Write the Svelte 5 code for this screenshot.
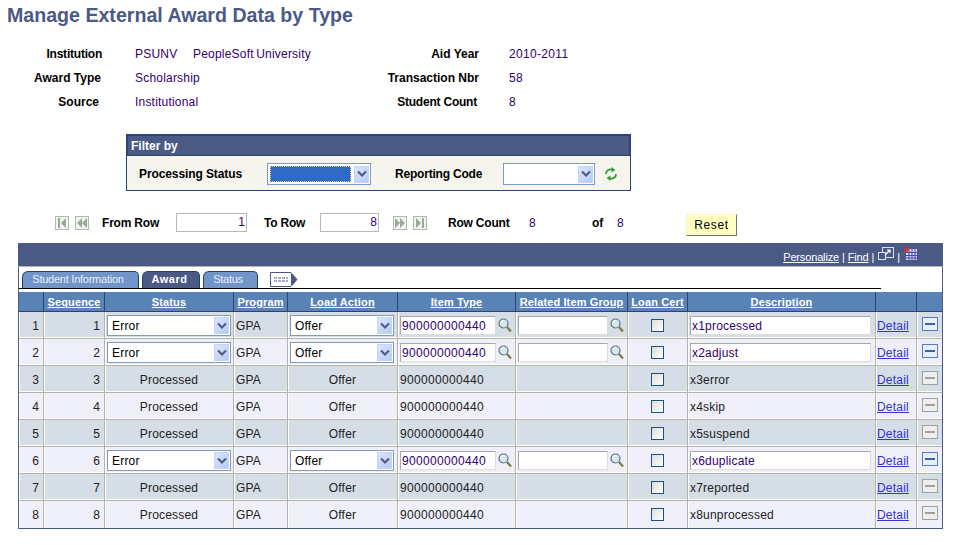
<script>
  const statusRows = [
    { n: 1, desc: 'x1processed', edit: true },
    { n: 2, desc: 'x2adjust', edit: true },
    { n: 3, desc: 'x3error', edit: false },
    { n: 4, desc: 'x4skip', edit: false },
    { n: 5, desc: 'x5suspend', edit: false },
    { n: 6, desc: 'x6duplicate', edit: true },
    { n: 7, desc: 'x7reported', edit: false },
    { n: 8, desc: 'x8unprocessed', edit: false }
  ];
  const heads = ['', 'Sequence', 'Status', 'Program', 'Load Action', 'Item Type', 'Related Item Group', 'Loan Cert', 'Description', '', ''];
</script>

{#snippet arrow()}
  <span class="arrow">
    <svg width="10" height="8" viewBox="0 0 10 8"><path d="M1 1.5 L5 5.5 L9 1.5" fill="none" stroke="#4a5a85" stroke-width="2"/></svg>
  </span>
{/snippet}

{#snippet lens()}
  <svg class="lens" width="14" height="15" viewBox="0 0 14 15">
    <circle cx="5.5" cy="5.5" r="4.5" fill="#d4e8f4" stroke="#5f7480" stroke-width="1.2"/>
    <path d="M3 4.5 A3 3 0 0 1 6 2.5" fill="none" stroke="#fff" stroke-width="1.2"/>
    <path d="M9 9 L13 13.5" stroke="#7d7a3c" stroke-width="2.2"/>
  </svg>
{/snippet}

{#snippet pagerIcon(d)}
  <span class="pg-icon">
    <svg width="12" height="12" viewBox="0 0 12 12"><path {d} fill="#9aa89a"/></svg>
  </span>
{/snippet}

<main class="page">
  <h1>Manage External Award Data by Type</h1>

  <section class="info">
    <div class="lab snug">Institution</div>
    <div class="val"><span class="code">PSUNV</span><span class="uni">PeopleSoft University</span></div>
    <div class="lab2">Aid Year</div>
    <div class="val2">2010-2011</div>

    <div class="lab minus1">Award Type</div>
    <div class="val">Scholarship</div>
    <div class="lab2">Transaction Nbr</div>
    <div class="val2">58</div>

    <div class="lab minus3">Source</div>
    <div class="val">Institutional</div>
    <div class="lab2 minus3 snug">Student Count</div>
    <div class="val2">8</div>
  </section>

  <section class="filter">
    <div class="filter-head">Filter by</div>
    <div class="filter-body">
      <span class="flabel first">Processing Status</span>
      <span class="select sel-a"><span class="picked"></span>{@render arrow()}</span>
      <span class="flabel second">Reporting Code</span>
      <span class="select sel-b">{@render arrow()}</span>
      <svg class="refresh" width="14" height="14" viewBox="0 0 14 14">
        <path d="M2 7 A4.5 4.5 0 0 1 8 2.6" fill="none" stroke="#2f9a3f" stroke-width="1.8"/>
        <path d="M7.5 0 L11.5 3 L7.5 5.5 Z" fill="#2f9a3f"/>
        <path d="M12 7 A4.5 4.5 0 0 1 6 11.4" fill="none" stroke="#2f9a3f" stroke-width="1.8"/>
        <path d="M6.5 14 L2.5 11 L6.5 8.5 Z" fill="#2f9a3f"/>
      </svg>
    </div>
  </section>

  <section class="pager">
    {@render pagerIcon('M2 1h2v10H2zM10 1v10L5 6z')}
    {@render pagerIcon('M6 1v10L1 6zM11 1v10L6 6z')}
    <span class="plabel from">From Row</span>
    <span class="pinput">1</span>
    <span class="plabel to">To Row</span>
    <span class="pinput short">8</span>
    <span class="pg-gap"></span>
    {@render pagerIcon('M1 1v10l5-5zM6 1v10l5-5z')}
    {@render pagerIcon('M2 1v10l5-5zM8 1h2v10H8z')}
    <span class="plabel rc">Row Count</span>
    <span class="pval c1">8</span>
    <span class="plabel of">of</span>
    <span class="pval c2">8</span>
    <button class="reset">Reset</button>
  </section>

  <section class="grid">
    <div class="bar">
      <a href="#p">Personalize</a><span class="pipe">|</span><a href="#f">Find</a><span class="pipe">|</span>
      <svg class="zoom-ic" width="16" height="15" viewBox="0 0 16 15">
        <rect x="4.5" y="0.5" width="11" height="10" fill="none" stroke="#d8e0f0"/>
        <rect x="0.5" y="5.5" width="7" height="7" fill="#4a5a85" stroke="#d8e0f0"/>
        <path d="M7 8 L12 3 M9 3 H12 V6" fill="none" stroke="#fff" stroke-width="1.2"/>
      </svg>
      <span class="pipe tight">|</span>
      <svg class="dl-ic" width="14" height="13" viewBox="0 0 14 13">
        <rect x="3" y="2" width="11" height="11" fill="#d8d8f8"/>
        <path d="M3 5.5h11M3 8.5h11M3 11h11M6 2v11M9 2v11M12 2v11" stroke="#4848a8" stroke-width="1"/>
        <path d="M0 0 L5 4 M1 4 H5 V1" fill="none" stroke="#e03030" stroke-width="1.5"/>
      </svg>
    </div>

    <div class="tabs">
      <span class="tab wide">Student Information</span>
      <span class="tab active">Award</span>
      <span class="tab status">Status</span>
      <svg class="tab-more" width="28" height="15" viewBox="0 0 28 15">
        <path d="M0.5 0.5 H21 L27 7.5 L21 14.5 H0.5 Z" fill="#fff" stroke="#4a5a85"/>
        <path d="M21 1 L27 7.5 L21 14 Z" fill="#4a5a85"/>
        <path d="M4 6h14M4 9h14" stroke="#4a5a85" stroke-dasharray="3 1"/>
      </svg>
    </div>

    <table>
      <colgroup>
        <col class="c-a"/><col class="c-b"/><col class="c-c"/><col class="c-d"/><col class="c-e"/><col class="c-f"/><col class="c-g"/><col class="c-h"/><col class="c-i"/><col class="c-j"/><col class="c-k"/>
      </colgroup>
      <thead>
        <tr>
          {#each heads as h}
            <th>{#if h}<a href="#s">{h}</a>{/if}</th>
          {/each}
        </tr>
      </thead>
      <tbody>
        {#each statusRows as r, i}
          <tr class:odd={i % 2 === 0}>
            <td class="num">{r.n}</td>
            <td class="num">{r.n}</td>
            {#if r.edit}
              <td class="pad-s"><span class="select sel-st">Error{@render arrow()}</span></td>
            {:else}
              <td class="mid">Processed</td>
            {/if}
            <td class="txt">GPA</td>
            {#if r.edit}
              <td class="pad-s"><span class="select sel-la">Offer{@render arrow()}</span></td>
              <td class="pad-s"><span class="inp item digits">900000000440</span>{@render lens()}</td>
              <td class="pad-s"><span class="inp rel"></span>{@render lens()}</td>
            {:else}
              <td class="mid">Offer</td>
              <td class="txt digits">900000000440</td>
              <td></td>
            {/if}
            <td class="mid"><span class="check"></span></td>
            {#if r.edit}
              <td class="pad-s"><span class="inp desc">{r.desc}</span></td>
            {:else}
              <td class="txt">{r.desc}</td>
            {/if}
            <td class="txt"><a class="detail" href="#d">Detail</a></td>
            <td class="mid"><span class="del" class:on={r.edit}><i></i></span></td>
          </tr>
        {/each}
      </tbody>
    </table>
  </section>
</main>

<style>
  :global(body) { margin: 0; background: #fff; }
  .page {
    width: 959px; height: 545px; overflow: hidden; position: relative;
    font: 12px "Liberation Sans", Arial, sans-serif; color: #000; letter-spacing: .2px;
  }
  h1 {
    margin: 0; padding: 5px 0 0 7px; height: 27px; box-sizing: content-box;
    font-size: 19.6px; line-height: 21px; font-weight: bold; color: #4a5a85; letter-spacing: 0;
  }
  .info {
    display: grid; grid-template-columns: 102px 277px 100px auto; grid-auto-rows: 24px;
    margin-top: 10px; height: 72px; color: #000;
  }
  .lab, .lab2 { text-align: right; font-weight: bold; line-height: 24px; letter-spacing: 0; white-space: nowrap; }
  .lab.snug, .lab2.snug { letter-spacing: -.22px; }
  .minus1 { padding-right: 1px; }
  .minus3 { padding-right: 3px; }
  .lab2 { padding-right: 0; }
  .lab2.minus3 { padding-right: 2px; }
  .val { padding-left: 33px; line-height: 24px; color: #32006e; white-space: nowrap; }
  .val2 { padding-left: 30px; line-height: 24px; color: #32006e; letter-spacing: .33px; }
  .code { display: inline-block; width: 58px; }
  .uni { word-spacing: -1px; }

  .filter {
    margin: 20px 0 0 126px; width: 505px; height: 57px; box-sizing: border-box;
    border: 1px solid #2a4478; background: #f5f5ee;
  }
  .filter-head {
    height: 18px; line-height: 18px; padding: 1px 0 0 3px; background: #4a5a85; color: #fff; font-weight: bold; letter-spacing: 0;
    border: 1px solid #2a4478; box-sizing: content-box;
  }
  .filter-body { display: flex; align-items: center; height: 34px; }
  .flabel { font-weight: bold; letter-spacing: -.1px; margin-top: 2px; }
  .first { margin-left: 12px; width: 128px; }
  .second { margin-left: 24px; width: 108px; letter-spacing: -.2px; }
  .select {
    display: inline-flex; align-items: center; justify-content: space-between; box-sizing: border-box;
    height: 22px; background: #fff; border: 1px solid #7f9db9; padding: 1px; color: #000;
  }
  .sel-a { width: 104px; margin-top: 2px; }
  .picked { width: 81px; height: 16px; background: #316ac5; margin-left: 1px; outline: 1px dotted #e0d080; outline-offset: -1px; }
  .sel-b { width: 92px; justify-content: flex-end; margin-top: 2px; }
  .arrow {
    width: 15px; height: 17px; background: linear-gradient(135deg, #dce6fb, #b6caf6); border: 1px solid #c4d4f4;
    display: inline-flex; align-items: center; justify-content: center; box-sizing: border-box;
  }
  .refresh { margin: 2px 0 0 9px; }

  .pager { display: flex; align-items: center; height: 22px; margin: 21px 0 0 55px; position: relative; }
  .pg-icon {
    width: 14px; height: 14px; box-sizing: border-box; border: 1px solid #b0b8b0; margin-right: 6px;
    display: inline-flex; align-items: center; justify-content: center; background: #f2f4f2;
  }
  .plabel { font-weight: bold; letter-spacing: -.2px; }
  .from { margin-left: 7px; width: 74px; }
  .pinput {
    box-sizing: border-box; width: 71px; height: 19px; border: 1px solid #b8b8b8; text-align: right; padding-right: 1px;
    line-height: 17px; color: #32006e; background: #fff; margin-top: -2px;
  }
  .pinput.short { width: 59px; }
  .to { margin-left: 17px; width: 56px; }
  .pg-gap { width: 14px; }
  .rc { margin-left: 15px; width: 81px; }
  .pval { color: #32006e; }
  .c1 { width: 63px; }
  .of { width: 25px; }
  .c2 { width: 69px; }
  .reset {
    width: 51px; height: 22px; padding: 0; box-sizing: border-box; background: #ffffbf; color: #000; margin-top: 4px;
    border: 1px solid; border-color: #f4f4d0 #77776a #77776a #f4f4d0; font: 12px "Liberation Sans", Arial, sans-serif;
    letter-spacing: .6px;
  }

  .grid {
    margin: 9px 0 0 18px; width: 925px; height: 286px; box-sizing: border-box;
    border: 1px solid #4a5a85; border-width: 0 1px 1px 1px; background: #fff;
  }
  .bar {
    margin: 0 -1px; height: 24px; background: #4a5a85; display: flex; align-items: center; justify-content: flex-end;
    padding: 5px 26px 0 0; box-sizing: border-box; font-size: 11px; color: #fff; border-bottom: 1px solid #b5b5a5;
    letter-spacing: -.15px;
  }
  .bar a { color: #fff; }
  .pipe { margin: 0 3px; }
  .pipe.tight { margin: 0 2px 0 3px; }
  .zoom-ic { margin: -5px 0 0 1px; }
  .dl-ic { margin: -8px 0 0 1px; }
  .tabs {
    height: 22px; box-sizing: border-box; display: flex; align-items: flex-end; padding-left: 3px; gap: 3px;
    position: relative; margin-bottom: 3px;
  }
  .tabs::after {
    content: ""; position: absolute; left: 0; width: 862px; bottom: 0; border-bottom: 1px solid #000;
  }
  .tab {
    height: 18px; line-height: 15px; background: #7295c9; color: #e6edf8; border: 1px solid #26406f; border-bottom: 0;
    border-radius: 6px 5px 0 0; text-align: center; font-size: 11px; box-sizing: border-box; letter-spacing: -.25px;
  }
  .wide { width: 117px; padding-right: 5px; }
  .active { width: 58px; background: #4a5a85; color: #fff; font-weight: bold; letter-spacing: .5px; padding-right: 3px; }
  .status { width: 55px; padding-right: 5px; }
  .tab-more { margin: 0 0 2px 9px; }

  table { border-collapse: separate; border-spacing: 0; table-layout: fixed; width: 923px; }
  .c-a { width: 24px; } .c-b { width: 61px; } .c-c { width: 129px; } .c-d { width: 54px; }
  .c-e { width: 110px; } .c-f { width: 118px; } .c-g { width: 112px; } .c-h { width: 60px; }
  .c-i { width: 188px; } .c-j { width: 41px; } .c-k { width: 26px; }
  th {
    height: 20px; box-sizing: border-box; padding: 0; background: #5a83b5; color: #fff; font-weight: bold; font-size: 11px;
    border-left: 1px solid #2a4478; border-bottom: 1px solid #2a4478; text-align: center; letter-spacing: .12px;
  }
  th:first-child { border-left: 0; }
  th a { color: #fff; }
  td {
    height: 27px; padding: 1px 0 0; border-left: 1px solid #b5b5a5; border-bottom: 1px solid #b5b5a5; background: #eeeff8;
    box-shadow: inset 1px 0 0 #fff, inset 0 -1px 0 #fff;
    box-sizing: border-box; white-space: nowrap; color: #222;
  }
  td:first-child { border-left: 0; }
  tr:last-child td { border-bottom: 0; padding-top: 0; box-shadow: inset 1px 0 0 #fff; }
  .odd td { background: #d5dde6; }
  .num { text-align: right; padding-right: 4px; }
  .mid { text-align: center; }
  .txt { padding-left: 2px; }
  .digits { letter-spacing: .33px; }
  .pad-s { padding-left: 2px; }
  .sel-st { width: 124px; height: 21px; padding-left: 4px; vertical-align: middle; }
  .sel-la { width: 104px; height: 21px; padding-left: 4px; vertical-align: middle; }
  .inp {
    display: inline-block; box-sizing: border-box; height: 19px; line-height: 18px; vertical-align: middle;
    border: 1px solid #a8a8a8; border-right-color: #ddd; border-bottom-color: #ddd; background: #fff; padding-left: 1px; color: #32006e;
  }
  .item { width: 96px; }
  .rel { width: 90px; }
  .desc { width: 181px; }
  .lens { vertical-align: middle; margin-left: 2px; }
  .check {
    display: inline-block; width: 13px; height: 13px; border: 1px solid #1c5180; box-sizing: border-box; vertical-align: middle;
    background: linear-gradient(135deg, #dcdcd7, #fff); margin-bottom: 1px;
  }
  .detail { color: #3434d8; margin-left: -1px; }
  .del {
    display: inline-flex; width: 16px; height: 14px; box-sizing: border-box; border: 1px solid #a0a0a0; background: #eee;
    align-items: center; justify-content: center; vertical-align: middle; margin-bottom: 3px;
  }
  .del i { display: block; width: 10px; height: 2px; background: #a0a0a0; }
  .del.on { border-color: #5a7abf; background: #e6f0f8; }
  .del.on i { background: #3f5fa8; }
</style>
